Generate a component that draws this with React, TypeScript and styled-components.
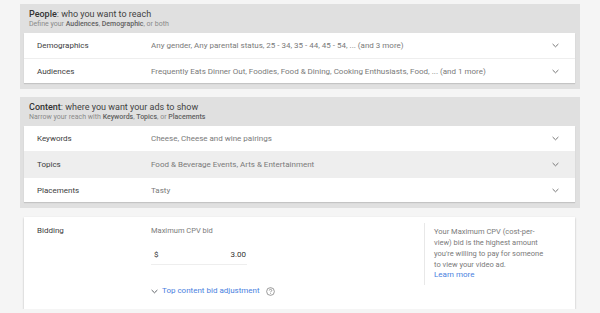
import { createGlobalStyle, styled } from 'styled-components'

const GlobalStyle = createGlobalStyle`
  html, body {
    margin: 0;
    padding: 0;
    background: #f5f5f5;
    font-family: Roboto, 'Liberation Sans', Arial, sans-serif;
  }
  * {
    box-sizing: border-box;
  }
`

const Chevron = ({ color = '#757575' }: { color?: string }) => (
  <svg width="7" height="5" viewBox="0 0 7 5" fill="none">
    <path d="M0.6 1 L3.5 3.8 L6.4 1" stroke={color} strokeWidth="1" />
  </svg>
)

const HelpIcon = () => (
  <svg width="9" height="9" viewBox="0 0 10 10" fill="none">
    <circle cx="5" cy="5" r="4.3" stroke="#757575" strokeWidth="0.8" />
    <path
      d="M3.6 3.9 C3.6 3.1 4.2 2.6 5 2.6 C5.8 2.6 6.4 3.1 6.4 3.8 C6.4 4.7 5.1 4.8 5.1 5.9"
      stroke="#757575"
      strokeWidth="0.8"
    />
    <circle cx="5.1" cy="7.3" r="0.5" fill="#757575" />
  </svg>
)

type Row = { label: string; value: string; shaded?: boolean; height?: number }

const peopleRows: Row[] = [
  {
    label: 'Demographics',
    value: 'Any gender, Any parental status, 25 - 34, 35 - 44, 45 - 54, ... (and 3 more)',
  },
  {
    label: 'Audiences',
    value: 'Frequently Eats Dinner Out, Foodies, Food & Dining, Cooking Enthusiasts, Food, ... (and 1 more)',
  },
]

const contentRows: Row[] = [
  { label: 'Keywords', value: 'Cheese, Cheese and wine pairings' },
  { label: 'Topics', value: 'Food & Beverage Events, Arts & Entertainment', shaded: true, height: 26 },
  { label: 'Placements', value: 'Tasty' },
]

const App = () => {
  return (
    <>
      <GlobalStyle />
      <Page>
        <Section>
          <SectionHeader>
            <Title>
              <b>People</b>: who you want to reach
            </Title>
            <Subtitle>
              Define your <b>Audiences</b>, <b>Demographic</b>, or both
            </Subtitle>
          </SectionHeader>
          <Card>
            {peopleRows.map((r) => (
              <TargetRow key={r.label} $shaded={r.shaded} $height={r.height}>
                <RowLabel>{r.label}</RowLabel>
                <RowValue>{r.value}</RowValue>
                <Chevron />
              </TargetRow>
            ))}
          </Card>
        </Section>

        <Section>
          <SectionHeader>
            <Title>
              <b>Content</b>: where you want your ads to show
            </Title>
            <Subtitle>
              Narrow your reach with <b>Keywords</b>, <b>Topics</b>, or <b>Placements</b>
            </Subtitle>
          </SectionHeader>
          <Card>
            {contentRows.map((r) => (
              <TargetRow key={r.label} $shaded={r.shaded} $height={r.height}>
                <RowLabel>{r.label}</RowLabel>
                <RowValue>{r.value}</RowValue>
                <Chevron />
              </TargetRow>
            ))}
          </Card>
        </Section>

        <BiddingCard>
          <RowLabel>Bidding</RowLabel>
          <BidColumn>
            <FieldLabel>Maximum CPV bid</FieldLabel>
            <BidInput>
              <span>$</span>
              <span>3.00</span>
            </BidInput>
            <AdjustLink>
              <Chevron color="#5f6368" />
              <LinkText>Top content bid adjustment</LinkText>
              <HelpIcon />
            </AdjustLink>
          </BidColumn>
          <HelpBox>
            Your Maximum CPV (cost-per-view) bid is the highest amount you're willing to pay for
            someone to view your video ad.
            <LinkText as="div">Learn more</LinkText>
          </HelpBox>
        </BiddingCard>
      </Page>
    </>
  )
}

export default App

const Page = styled.div`
  display: flex;
  flex-direction: column;
  width: 600px;
  padding: 4px 20px 0 20px;
  gap: 8px;
`

const Section = styled.div`
  display: flex;
  flex-direction: column;
  background: #e0e0e0;
  padding: 0 5px 6px 4px;
`

const SectionHeader = styled.div`
  display: flex;
  flex-direction: column;
  height: 29px;
  padding: 5px 0 0 5px;
`

const Title = styled.div`
  font-size: 9px;
  line-height: 11px;
  color: #424242;
  b {
    font-weight: 500;
    color: #333;
  }
`

const Subtitle = styled.div`
  font-size: 7px;
  line-height: 9px;
  color: #8a8a8a;
  b {
    font-weight: 500;
    color: #616161;
  }
`

const Card = styled.div`
  display: flex;
  flex-direction: column;
  background: #fff;
  box-shadow: 0 1px 1px rgba(0, 0, 0, 0.12);
`

const TargetRow = styled.div<{ $shaded?: boolean; $height?: number }>`
  display: flex;
  align-items: center;
  height: ${(p) => p.$height ?? 25}px;
  padding: 0 16px 0 13px;
  background: ${(p) => (p.$shaded ? '#eeeeee' : '#fff')};
  & + & {
    border-top: 1px solid #eeeeee;
  }
`

const RowLabel = styled.div`
  width: 114px;
  flex: none;
  font-size: 8px;
  color: #3c3c3c;
`

const RowValue = styled.div`
  flex: 1;
  font-size: 8px;
  color: #7a7a7a;
  white-space: nowrap;
  overflow: hidden;
`

const BiddingCard = styled.div`
  display: flex;
  align-items: flex-start;
  margin: 1px 5px 0 4px;
  height: 92px;
  padding: 9px 13px 0 13px;
  background: #fff;
  box-shadow: 0 1px 2px rgba(0, 0, 0, 0.25);
`

const BidColumn = styled.div`
  display: flex;
  flex-direction: column;
  width: 273px;
`

const FieldLabel = styled.div`
  font-size: 7.5px;
  line-height: 10px;
  color: #7a7a7a;
`

const BidInput = styled.div`
  display: flex;
  justify-content: space-between;
  width: 96px;
  margin-top: 13px;
  padding: 0 1px 4px 3px;
  border-bottom: 1px solid #eeeeee;
  font-size: 8px;
  line-height: 11px;
  color: #333;
`

const AdjustLink = styled.div`
  display: flex;
  align-items: center;
  gap: 4px;
  margin-top: 21px;
  svg:last-child {
    margin-left: 2px;
  }
`

const LinkText = styled.span`
  font-size: 8px;
  line-height: 10px;
  color: #4a7fe0;
`

const HelpBox = styled.div`
  width: 122px;
  margin-top: -3px;
  padding: 3px 0 5px 9px;
  border-left: 1px solid #e8e8e8;
  font-size: 7.5px;
  line-height: 11px;
  color: #7a7a7a;
`
